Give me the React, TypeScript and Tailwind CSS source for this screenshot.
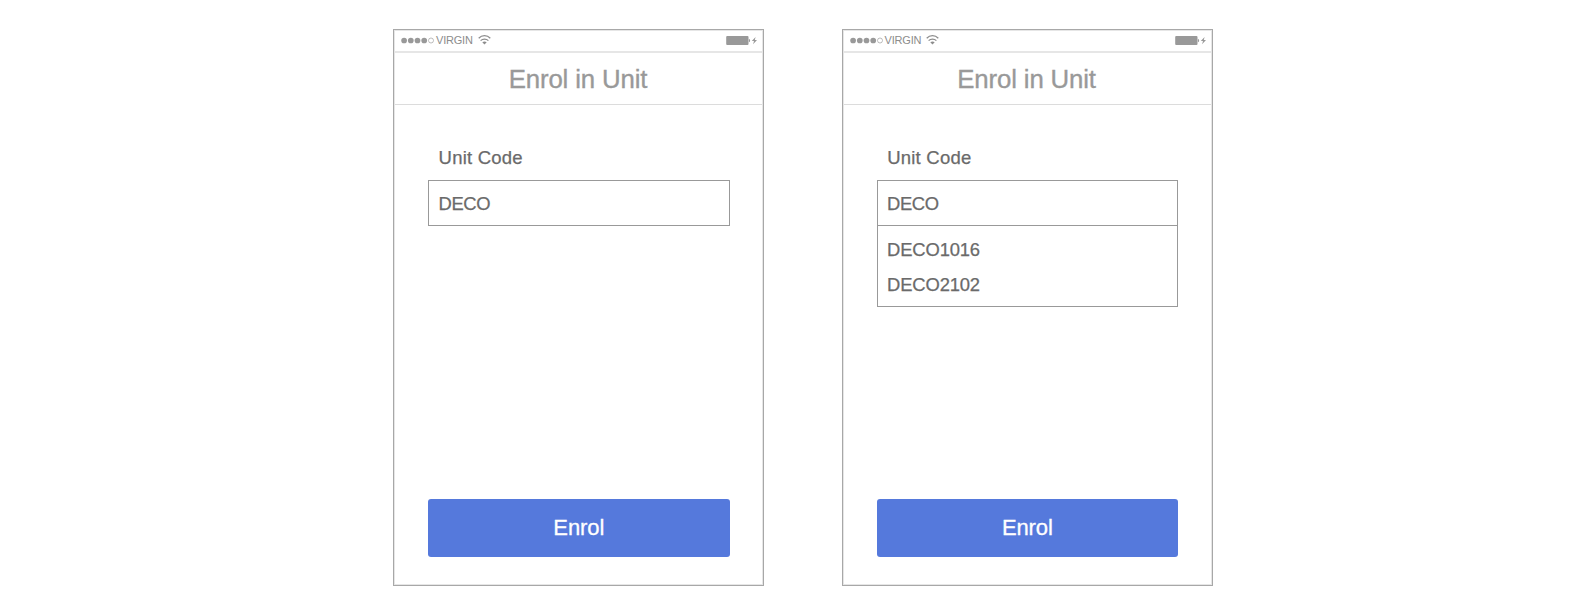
import React from "react";

function SignalDots() {
  return (
    <svg className="h-[7px] w-[34px] shrink-0" viewBox="0 0 34 7" fill="#999999">
      <circle cx="3.1" cy="3.5" r="2.85" />
      <circle cx="9.8" cy="3.5" r="2.85" />
      <circle cx="16.5" cy="3.5" r="2.85" />
      <circle cx="23.2" cy="3.5" r="2.85" />
      <circle cx="30" cy="3.5" r="2.5" fill="none" stroke="#a0a0a0" strokeWidth="0.7" />
    </svg>
  );
}

function WifiIcon() {
  return (
    <svg className="h-[10px] w-[13px] shrink-0" viewBox="0 0 13 10" fill="none" stroke="#8c8c8c" strokeWidth="1.25">
      <path d="M0.7 3.2C3.9 -0.1 9.1 -0.1 12.3 3.2" />
      <path d="M2.6 5.6C4.8 3.5 8.2 3.5 10.4 5.6" />
      <path d="M4.3 7.3C5.6 6.2 7.4 6.2 8.7 7.3L6.5 9.6Z" fill="#8c8c8c" stroke="none" />
    </svg>
  );
}

function BatteryIcon() {
  return (
    <svg className="h-[9px] w-[31px] shrink-0" viewBox="0 0 31 9" fill="#999999">
      <rect x="0.2" y="0.1" width="22.3" height="8.8" rx="0.9" />
      <path d="M22.9 2.7C24.5 3.1 24.5 5.9 22.9 6.3Z" />
      <path d="M29.6 0.9L25.8 5H28L27.1 8.3L31 4.1H28.8Z" />
    </svg>
  );
}

function Phone({ options = [] }: { options?: string[] }) {
  return (
    <section className="flex h-[557px] w-[371px] shrink-0 flex-col border border-[#a8a8a8] outline outline-1 -outline-offset-2 outline-[#e6e6e6]">
      <div className="flex h-[23px] items-center border-b-2 border-[#e6e6e6] pr-[6px] pl-[7px]">
        <SignalDots />
        <span className="ml-[1px] mt-[-2px] text-[11px] leading-[20px] tracking-[-0.2px] text-[#8c8c8c]">VIRGIN</span>
        <span className="mt-[-2px] ml-[5px]"><WifiIcon /></span>
        <span className="ml-auto"><BatteryIcon /></span>
      </div>
      <h1 className="h-[52px] border-b border-[#dcdcdc] pr-[1px] text-center text-[25.8px] leading-[52px] tracking-[-0.15px] text-[#999999] [-webkit-text-stroke:0.35px_#999999]">
        Enrol in Unit
      </h1>
      <div className="flex grow flex-col pr-[33.5px] pb-[28px] pl-[34px] text-[#6a6a6a] [-webkit-text-stroke:0.25px_#6a6a6a]">
        <label className="mt-[41px] pl-[10.6px] text-[18.5px] leading-[24px] tracking-[0.22px]">Unit Code</label>
        <div className="mt-[10px] flex h-[46px] shrink-0 items-center border border-[#999999] pt-[1px] pl-[9.5px] text-[18.4px] tracking-[-0.4px]">DECO</div>
        {options.length > 0 && (
          <ul className="-mt-px h-[82px] border border-[#999999] pt-[6px] pl-[9.5px] text-[18.4px] leading-[35px] tracking-[-0.15px]">
            {options.map((option) => (
              <li key={option}>{option}</li>
            ))}
          </ul>
        )}
        <button className="mt-auto h-[58px] w-full shrink-0 rounded-[3px] bg-[#5579dc] text-[22px] leading-[58px] tracking-[-0.1px] text-white [-webkit-text-stroke:0.3px_#ffffff]">
          Enrol
        </button>
      </div>
    </section>
  );
}

export default function App() {
  return (
    <main className="flex h-[614px] w-[1594px] items-start gap-[77.6px] overflow-hidden bg-white pt-[29px] pl-[393px] font-['Liberation_Sans',Arial,sans-serif]">
      <Phone />
      <Phone options={["DECO1016", "DECO2102"]} />
    </main>
  );
}
